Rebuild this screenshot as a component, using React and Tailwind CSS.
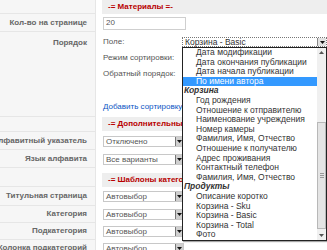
import React from 'react';

const OPTIONS = [
  { t: 'Дата модификации' },
  { t: 'Дата окончания публикации' },
  { t: 'Дата начала публикации' },
  { t: 'По имени автора', active: true },
  { t: 'Корзина', group: true },
  { t: 'Год рождения' },
  { t: 'Отношение к отправителю' },
  { t: 'Наименование учреждения' },
  { t: 'Номер камеры' },
  { t: 'Фамилия, Имя, Отчество' },
  { t: 'Отношение к получателю' },
  { t: 'Адрес проживания' },
  { t: 'Контактный телефон' },
  { t: 'Фамилия, Имя, Отчество' },
  { t: 'Продукты', group: true },
  { t: 'Описание коротко' },
  { t: 'Корзина - Sku' },
  { t: 'Корзина - Basic' },
  { t: 'Корзина - Total' },
  { t: 'Фото' },
];

function Arrow({ up = false }) {
  return (
    <svg width="5" height="3" viewBox="0 0 5 3" className="block">
      {up ? <path d="M0 3 L2.5 0 L5 3 Z" fill="#555" /> : <path d="M0 0 L5 0 L2.5 3 Z" fill="#111" />}
    </svg>
  );
}

function Select({ value }) {
  return (
    <div className="flex h-[11px] w-[81px] items-center border border-[#c8c8c8] bg-white">
      <span className="flex-1 truncate pl-[2px] text-[8px] leading-[9px] text-[#555]">{value}</span>
      <span className="flex h-full w-[8px] items-center justify-center border-l border-[#777] bg-[#cfcfcf]">
        <Arrow />
      </span>
    </div>
  );
}

function Label({ children, className = '' }) {
  return (
    <div
      className={`flex w-[96px] shrink-0 justify-end whitespace-nowrap border-b border-r border-[#e6e6e6] bg-[#f6f6f6] pr-[8px] text-[8px] font-bold leading-[10px] text-[#666] ${className}`}
    >
      {children}
    </div>
  );
}

function Header({ children }) {
  return (
    <div className="flex h-[14px] items-center whitespace-nowrap bg-[#eeeeee] pl-[6px] text-[8px] font-bold text-[#b80000]">
      {children}
    </div>
  );
}

export default function App() {
  return (
    <div className="relative h-[250px] w-[327px] overflow-hidden bg-white font-['Liberation_Sans',Arial,sans-serif]">
      {/* Материалы */}
      <div className="flex h-[14px]">
        <Label />
        <div className="flex-1 pl-[6px]">
          <Header>-= Материалы =-</Header>
        </div>
      </div>

      <div className="flex h-[18px]">
        <Label className="items-center">Кол-во на странице</Label>
        <div className="flex flex-1 items-center pl-[7px]">
          <div className="flex h-[13px] w-[83px] items-center border border-[#cfcfcf] pl-[2px] text-[8px] text-[#555]">20</div>
        </div>
      </div>

      <div className="flex h-[85px]">
        <Label className="items-start pt-[6px]">Порядок</Label>
        <div className="flex flex-1 flex-col pl-[7px] pt-[2px] text-[8px] text-[#555]">
          <div className="flex h-[16px] items-center">
            <span className="w-[79px]">Поле:</span>
            <div className="flex h-[10px] w-[145px] items-center border border-dotted border-[#777] bg-white">
              <span className="flex-1 pl-[2px] text-[8.5px] leading-[8px] text-[#333]">Корзина - Basic</span>
              <span className="flex h-full w-[9px] items-center justify-center border-l border-[#888] bg-[#e2e2e2]">
                <Arrow />
              </span>
            </div>
          </div>
          <div className="flex h-[16px] items-center">Режим сортировки:</div>
          <div className="flex h-[16px] items-center">Обратный порядок:</div>
          <div className="mt-[20px] whitespace-nowrap leading-[10px] text-[#0b55c4]">Добавить сортировку</div>
        </div>
      </div>

      {/* Дополнительно */}
      <div className="flex h-[15px]">
        <Label />
        <div className="flex-1 pl-[6px]">
          <Header>-= Дополнительные параметры =-</Header>
        </div>
      </div>

      <div className="flex h-[18px]">
        <Label className="items-center">Алфавитный указатель</Label>
        <div className="flex flex-1 items-center pl-[7px]">
          <Select value="Отключено" />
        </div>
      </div>

      <div className="flex h-[18px]">
        <Label className="items-center">Язык алфавита</Label>
        <div className="flex flex-1 items-center pl-[7px]">
          <Select value="Все варианты" />
        </div>
      </div>

      {/* Шаблоны */}
      <div className="flex h-[19px]">
        <Label />
        <div className="flex-1 pl-[6px] pt-[5px]">
          <Header>-= Шаблоны категорий =-</Header>
        </div>
      </div>

      {['Титульная страница', 'Категория', 'Подкатегория', 'Колонка подкатегорий'].map((l, i) => (
        <div key={l} className={`flex ${i === 0 ? 'h-[19px]' : 'h-[17px]'}`}>
          <Label className="items-center">{l}</Label>
          <div className="flex flex-1 items-center pl-[7px]">
            <Select value="Автовыбор" />
          </div>
        </div>
      ))}

      {/* открытый список */}
      <div className="absolute left-[182px] top-[47px] flex h-[194px] w-[145px] border border-[#222] bg-white shadow-[1px_1px_1px_rgba(0,0,0,0.35)]">
        <div className="flex-1 overflow-hidden">
          {OPTIONS.map((o, i) => (
            <div
              key={i}
              className={`h-[9.6px] overflow-hidden whitespace-nowrap text-[8.5px] leading-[9.6px] ${
                o.group ? 'pl-[1px] font-bold italic text-[#222]' : 'pl-[13px]'
              } ${o.active ? 'bg-[#3399ff] text-white' : 'text-[#333]'}`}
            >
              {o.t}
            </div>
          ))}
        </div>
        <div className="flex w-[9px] flex-col bg-[#f0f0f0]">
          <div className="flex h-[9px] items-center justify-center">
            <Arrow up />
          </div>
          <div className="h-[65px]" />
          <div className="flex h-[107px] flex-col items-center justify-center gap-[1px] border border-[#b8b8b8] bg-[#e4e4e4]">
            <span className="h-px w-[4px] bg-[#999]" />
            <span className="h-px w-[4px] bg-[#999]" />
            <span className="h-px w-[4px] bg-[#999]" />
          </div>
          <div className="flex-1" />
          <div className="flex h-[9px] items-center justify-center">
            <svg width="5" height="3" viewBox="0 0 5 3" className="block">
              <path d="M0 0 L5 0 L2.5 3 Z" fill="#555" />
            </svg>
          </div>
        </div>
      </div>
    </div>
  );
}
